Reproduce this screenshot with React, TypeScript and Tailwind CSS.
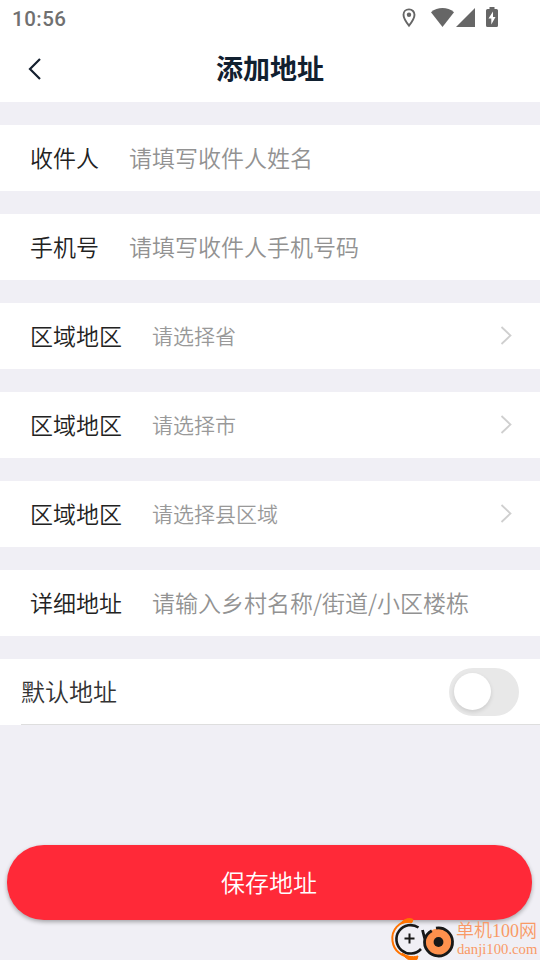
import React from "react";

type Field = { label: string; hint: string; select?: boolean };

const fields: Field[] = [
  { label: "收件人", hint: "请填写收件人姓名" },
  { label: "手机号", hint: "请填写收件人手机号码" },
  { label: "区域地区", hint: "请选择省", select: true },
  { label: "区域地区", hint: "请选择市", select: true },
  { label: "区域地区", hint: "请选择县区域", select: true },
  { label: "详细地址", hint: "请输入乡村名称/街道/小区楼栋" },
];

function StatusBar() {
  return (
    <div className="flex h-[36px] items-center justify-between bg-white pl-[12px] pr-[41px] pt-[2px]">
      <span className="font-[Roboto] text-[20.5px] leading-none font-medium tracking-[0.5px] text-[#707070]">10:56</span>
      <svg className="-mt-[2px]" width="98" height="24" viewBox="401 6 98 24" fill="#666">
        <path d="M409 9.4c-3.3 0-5.5 2.4-5.5 5.4 0 4 5.5 10.9 5.5 10.9s5.5-6.900 5.500-10.900c0-3-2.200-5.400-5.500-5.400Z" fill="none" stroke="#666" strokeWidth="1.900" />
        <circle cx="409" cy="14.700" r="2.200" />
        <path d="M431 12.200C437.500 6.700 447.500 6.700 454 12.200L442.500 27Z" />
        <path d="M475 8v19h-19Z" />
        <path fillRule="evenodd" d="M489.500 7h5v2h2q1.500 0 1.500 1.500v15q0 1.500-1.500 1.500h-9q-1.500 0-1.500-1.500v-15q0-1.500 1.500-1.500h2Zm3.500 4.500-4.500 7h2.800v6l4.200-7.500h-2.500Z" />
      </svg>
    </div>
  );
}

function Header() {
  return (
    <header className="grid h-[66px] grid-cols-[1fr_auto_1fr] items-center bg-white">
      <svg className="ml-[27px]" width="16" height="24" viewBox="0 0 16 24" fill="none" stroke="#15202f" strokeWidth="2.200">
        <path d="M13 2 3 12l10 10" />
      </svg>
      <h1 className="pb-[4px] text-[27px] leading-none font-bold text-[#112030]">添加地址</h1>
    </header>
  );
}

function Row({ label, hint, select }: Field) {
  return (
    <div className="flex h-[66px] items-center bg-white pl-[30px] pr-[28px]">
      <span className="pb-[2px] text-[23px] leading-[34px] text-[#222]">{label}</span>
      <span className={select ? "ml-[30px] pb-[2px] text-[21px] leading-[34px] text-[#999]" : "ml-[30px] pb-[2px] text-[23px] leading-[34px] text-[#929292]"}>
        {hint}
      </span>
      {select && (
        <svg className="ml-auto -mt-px" width="12" height="20" viewBox="0 0 12 20" fill="none" stroke="#cfcfcf" strokeWidth="1.800">
          <path d="m1.500 1 9 8.500-9 8.500" />
        </svg>
      )}
    </div>
  );
}

function Watermark() {
  return (
    <div className="absolute left-[389px] top-[917px] flex h-[43px] w-[151px]">
      <svg className="shrink-0" width="67" height="43" viewBox="389 917 67 43" fill="none">
        <path d="M411 921C399 921 391 930 392.500 941c1.300 10 9 16 20.500 16.500" stroke="#ff7300" strokeWidth="2" />
        <path d="M400 924c4-5.500 10-6.500 13-4.500l-1 3c-4-.500-8 0-12 1.500ZM402 953c5 3.500 10 4.500 16 3l-1 3.500c-6 2.500-12-.500-15-6.500Z" fill="#ff7300" stroke="#ff7300" strokeWidth="1" />
        <path d="M418.500 927.500A14.200 14.200 0 1 0 421 949" stroke="#181818" strokeWidth="2.600" />
        <path d="M404.500 938.500h10m-5-5v10" stroke="#181818" strokeWidth="2" />
        <circle cx="438.500" cy="942" r="13.500" fill="#ff914d" />
        <path d="M436 928.200a14 14 0 1 1-11.200 11c1-3.500 3.500-6.500 7-8.500M422.500 930l2.300 9" stroke="#181818" strokeWidth="2.800" />
        <circle cx="438.500" cy="942" r="4.900" fill="#181818" />
      </svg>
      <div className="flex flex-col whitespace-nowrap text-[#f99a66] [font-family:'Liberation_Serif','Noto_Sans_CJK_SC',serif]">
        <span className="mt-[3px] text-[18px] leading-[23px]">单机100网</span>
        <span className="-mt-px pl-px text-[14.700px] leading-[14px]">danji100.com</span>
      </div>
    </div>
  );
}

export default function App() {
  return (
    <main className="relative flex h-[960px] w-[540px] flex-col overflow-hidden bg-[#f0eff5] [font-family:'Noto_Sans_CJK_SC',sans-serif] font-[350]">
      <StatusBar />
      <Header />
      <div className="mt-[23px] flex flex-col gap-[23px]">
        {fields.map((field) => (
          <Row key={field.hint} {...field} />
        ))}
        <div className="h-[66px] bg-white pl-[21px]">
          <div className="flex h-full items-center justify-between border-b border-[#dedede] pr-[21px]">
            <span className="pb-[1px] text-[24px] leading-[36px] text-[#333]">默认地址</span>
            <button className="flex h-[48px] w-[70px] items-center rounded-full bg-[#e8e8e8] pl-[5px]">
              <span className="size-[37px] rounded-full bg-white shadow-[0_2px_4px_#00000020]" />
            </button>
          </div>
        </div>
      </div>
      <button className="mx-[7px] mt-[120px] h-[75px] w-[525px] shrink-0 rounded-[37px] bg-[#ff2938] pr-[1px] pb-[1px] text-[24px] text-white shadow-[0_2px_4px_#00000050]">
        保存地址
      </button>
      <Watermark />
    </main>
  );
}
